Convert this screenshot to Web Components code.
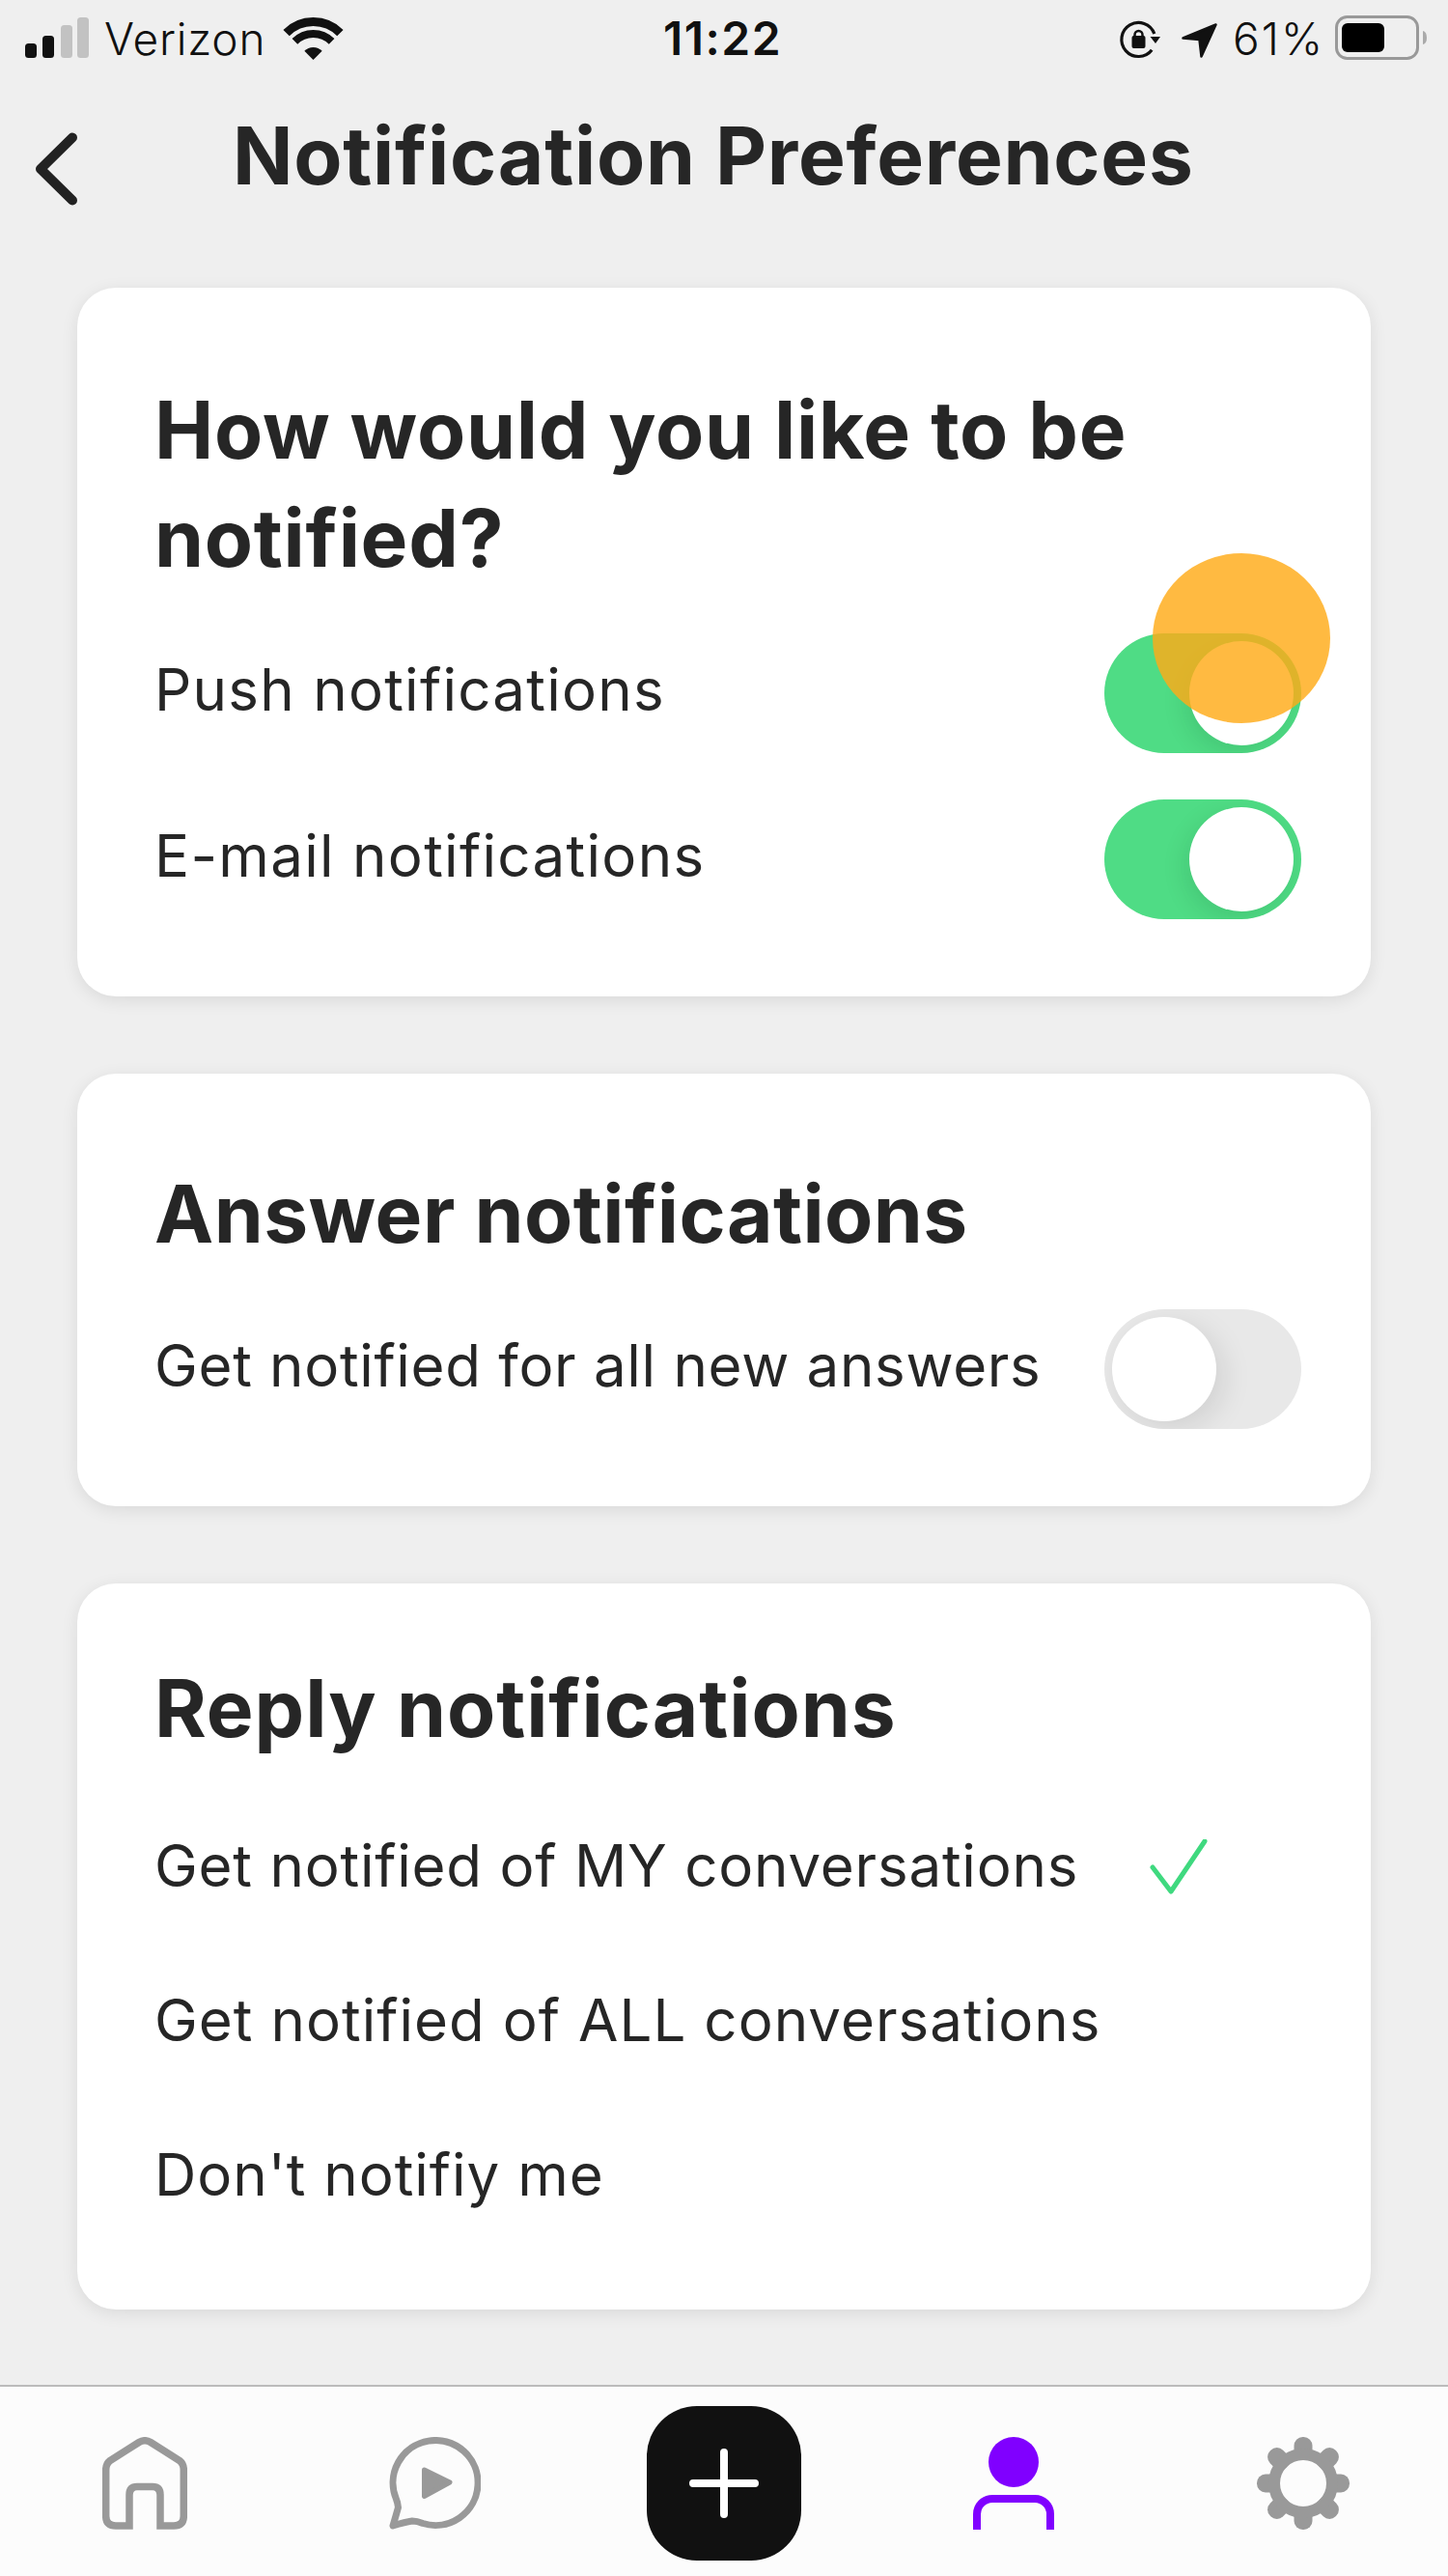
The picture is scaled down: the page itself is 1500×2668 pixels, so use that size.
<!DOCTYPE html>
<html lang="en">
<head>
<meta charset="utf-8">
<title>Notification Preferences</title>
<style>
  html, body { margin: 0; padding: 0; height: 2668px; overflow: hidden; background: #efefef; }
  body { font-family: Inter, "Liberation Sans", sans-serif; color: #262626; }
</style>
</head>
<body>
<app-screen>
  <status-bar></status-bar>
  <page-header>Notification Preferences</page-header>
  <main-stack>
    <pref-card style="--pad-top:92px;--pad-bottom:80px;--gap:42px">
      <span slot="title" style="letter-spacing:.75px">How would you like to be<br>notified?</span>
      <toggle-row on touched style="letter-spacing:1.28px">Push notifications</toggle-row>
      <toggle-row on style="letter-spacing:1.32px">E-mail notifications</toggle-row>
    </pref-card>
    <pref-card style="--pad-top:90px;--pad-bottom:80px;--gap:42px">
      <span slot="title" style="letter-spacing:.45px">Answer notifications</span>
      <toggle-row style="letter-spacing:.7px">Get notified for all new answers</toggle-row>
    </pref-card>
    <pref-card style="--pad-top:74px;--pad-bottom:60px;--gap:26px;--row-gap:0px">
      <span slot="title" style="letter-spacing:.95px">Reply notifications</span>
      <option-row checked style="letter-spacing:.8px">Get notified of MY conversations</option-row>
      <option-row style="letter-spacing:1.05px">Get notified of ALL conversations</option-row>
      <option-row style="letter-spacing:1px">Don't notifiy me</option-row>
    </pref-card>
  </main-stack>
  <tab-bar></tab-bar>
</app-screen>

<script>
function def(name, html) {
  customElements.define(name, class extends HTMLElement {
    constructor() {
      super();
      const root = this.attachShadow({ mode: 'open' });
      root.innerHTML = typeof html === 'function' ? html(this) : html;
    }
  });
}

def('app-screen', `<style>
  :host { display:flex; flex-direction:column; width:1500px; height:2668px; background:#efefef; }
</style><slot></slot>`);

def('status-bar', `<style>
  :host { display:grid; grid-template-columns:1fr auto 1fr; height:106px; box-sizing:border-box; padding:16px 21px 0 26px;
    font:300 46px/48px Inter,"Liberation Sans",sans-serif; color:#111; }
  .l,.r { display:flex; align-items:flex-start; }
  .r { justify-content:flex-end; }
  .t { font-weight:600; font-size:48px; letter-spacing:1.5px; margin-right:8px; }
  svg { display:block; height:48px; overflow:visible; flex:none; }
  .car { margin:0 20px 0 16px; letter-spacing:.8px; }
  .pct { margin:0 11px 0 16px; letter-spacing:2px; }
</style>
<div class="l">
  <svg width="66" viewBox="0 0 66 48"><rect x="0" y="29" width="12" height="15" rx="3.500" fill="#111"/><rect x="18" y="21" width="12" height="23" rx="3.500" fill="#111"/><rect x="37" y="10" width="12" height="34" rx="3.500" fill="#c2c2c2"/><rect x="54" y="2" width="12" height="42" rx="3.500" fill="#c2c2c2"/></svg>
  <span class="car">Verizon</span>
  <svg width="59" viewBox="0 0 59 48"><path d="M1.600 18.100 A39.500 39.500 0 0 1 57.400 18.100" fill="none" stroke="#111" stroke-width="9"/><path d="M10.400 26.900 A27 27 0 0 1 48.600 26.900" fill="none" stroke="#111" stroke-width="8"/><path d="M29.500 46 L20.300 36.800 A13 13 0 0 1 38.700 36.800 Z" fill="#111"/></svg>
</div>
<div class="t">11:22</div>
<div class="r">
  <svg width="46" viewBox="0 0 46 48" style="margin-right:18px"><path d="M33.200 35.700 A17.500 17.500 0 1 1 35.800 19" fill="none" stroke="#111" stroke-width="3.200"/><path d="M31.500 22 L42 22 L37 29 Z" fill="#111"/><rect x="12.500" y="21" width="14" height="13" rx="2" fill="#111"/><path d="M15.500 22 V20 A4 4 0 0 1 23.500 20 V22" fill="none" stroke="#111" stroke-width="2.500"/></svg>
  <svg width="37" viewBox="0 0 37 48"><path d="M1.500 23.500 L35.500 9.500 L20.500 42.500 L18.500 25 Z" fill="#111" stroke="#111" stroke-width="2.500" stroke-linejoin="round"/></svg>
  <span class="pct">61%</span>
  <svg width="96" viewBox="0 0 96 48"><rect x="1.500" y="1.500" width="84" height="43" rx="11" fill="none" stroke="#999" stroke-width="3"/><rect x="7" y="8" width="44" height="30" rx="6" fill="#000"/><path d="M91 16 Q95 17 95 23 Q95 29 91 30 Z" fill="#aaa"/></svg>
</div>`);

def('page-header', `<style>
  :host { display:flex; align-items:center; height:112px; padding-left:36px; }
  svg { display:block; width:44px; height:76px; flex:none; margin-top:26px; }
  h1 { margin:0 0 0 161px; font:700 82px/112px Inter,"Liberation Sans",sans-serif; color:#262626; letter-spacing:.75px; white-space:nowrap; }
</style>
<svg viewBox="0 0 44 76"><path d="M39 5.500 L6 38 L39 70.500" fill="none" stroke="#222" stroke-width="10" stroke-linecap="round" stroke-linejoin="round"/></svg>
<h1><slot></slot></h1>`);

def('main-stack', `<style>
  :host { display:flex; flex-direction:column; gap:80px; flex:1; padding:80px 80px 0; box-sizing:border-box; min-height:0; }
</style><slot></slot>`);

def('pref-card', `<style>
  :host { display:flex; flex-direction:column; background:#fff; border-radius:40px; box-sizing:border-box;
    padding:var(--pad-top) 72px var(--pad-bottom) 80px; box-shadow:0 4px 18px rgba(0,0,0,.09); }
  h2 { margin:0 0 var(--gap); font:700 82px/112px Inter,"Liberation Sans",sans-serif; color:#262626; white-space:nowrap; }
  .rows { display:flex; flex-direction:column; gap:var(--row-gap,48px); }
</style>
<h2><slot name="title"></slot></h2>
<div class="rows"><slot></slot></div>`);

def('toggle-row', (el) => `<style>
  :host { display:flex; align-items:center; justify-content:space-between; height:124px; position:relative;
    font:400 60px/124px Inter,"Liberation Sans",sans-serif; color:#262626; }
  .label { white-space:nowrap; position:relative; top:-4px; }
  .sw { width:204px; height:124px; border-radius:62px; flex:none; position:relative; overflow:hidden; box-sizing:border-box; }
  .sw.on { background:#4fdc85; }
  .sw.off { background:#e8e8e8; }
  .knob { position:absolute; top:8px; width:108px; height:108px; border-radius:50%; background:#fff; }
  .on .knob { right:8px; box-shadow:-4px 8px 24px rgba(0,60,20,.13); }
  .off .knob { left:8px; box-shadow:8px 8px 30px rgba(0,0,0,.1); }
  .touch { position:absolute; left:1034px; top:-83px; width:184px; height:176px; border-radius:50%; background:rgba(255,171,23,.82); }
</style>
<span class="label"><slot></slot></span>
<div class="sw ${el.hasAttribute('on') ? 'on' : 'off'}"><div class="knob"></div></div>
${el.hasAttribute('touched') ? '<div class="touch"></div>' : ''}`);

def('option-row', (el) => `<style>
  :host { display:flex; align-items:center; height:160px; font:400 60px/160px Inter,"Liberation Sans",sans-serif; color:#262626; position:relative; }
  span { white-space:nowrap; }
  svg { display:block; width:60px; height:58px; margin:4px 97px 0 auto; flex:none; }
</style>
<span><slot></slot></span>
${el.hasAttribute('checked') ? '<svg viewBox="0 0 60 58"><path d="M3 29 L22 54 L57 2" fill="none" stroke="#3fd97f" stroke-width="5" stroke-linecap="round" stroke-linejoin="round"/></svg>' : ''}`);

const teeth = [0,45,90,135,180,225,270,315].map(a => `<rect x="38.500" y="0" width="19" height="24" rx="9" fill="#999" transform="rotate(${a} 48 48)"/>`).join('');
def('tab-bar', `<style>
  :host { display:grid; grid-template-columns:repeat(5,300px); height:198px; box-sizing:border-box; border-top:2px solid #bbb; background:#fcfcfc; flex:none; }
  .c { display:flex; align-items:flex-start; justify-content:center; padding-top:52px; }
  .plus { padding-top:20px; }
  .btn { width:160px; height:160px; border-radius:52px; background:#111; display:flex; align-items:center; justify-content:center; }
  svg { display:block; }
</style>
<div class="c"><svg width="88" height="96" viewBox="0 0 88 96"><path d="M28 92 H14 Q3.700 92 3.700 82 V34 Q3.700 28 8 24.500 L38 5.500 Q44 2 50 5.500 L80 24.500 Q84.300 28 84.300 34 V82 Q84.300 92 74 92 H60 V60 Q60 51.500 52 51.500 H36 Q28 51.500 28 60 Z" fill="none" stroke="#999" stroke-width="7.500"/></svg></div>
<div class="c"><svg width="96" height="96" viewBox="0 0 96 96"><path d="M8.500 64.500 A44 44 0 1 1 36 89.500 Q30 87 25 87 Q18 88 5 92 Q8 82 10.500 73 Q10 68 8.500 64.500 Z" fill="none" stroke="#999" stroke-width="7" stroke-linejoin="round"/><path d="M37.500 34 L64 47 L37.500 61.500 Z" fill="#999" stroke="#999" stroke-width="5" stroke-linejoin="round"/></svg></div>
<div class="c plus"><div class="btn"><svg width="76" height="76" viewBox="0 0 76 76"><path d="M38 6 V70 M6 38 H70" fill="none" stroke="#fff" stroke-width="8" stroke-linecap="round"/></svg></div></div>
<div class="c"><svg width="84" height="96" viewBox="0 0 84 96"><circle cx="42" cy="26" r="26" fill="#8000ff"/><path d="M4 96 V80 A16 16 0 0 1 20 64 H64 A16 16 0 0 1 80 80 V96" fill="none" stroke="#8000ff" stroke-width="8"/></svg></div>
<div class="c"><svg width="96" height="96" viewBox="0 0 96 96">${teeth}<circle cx="48" cy="48" r="30" fill="none" stroke="#999" stroke-width="12"/></svg></div>`);
</script>
</body>
</html>
